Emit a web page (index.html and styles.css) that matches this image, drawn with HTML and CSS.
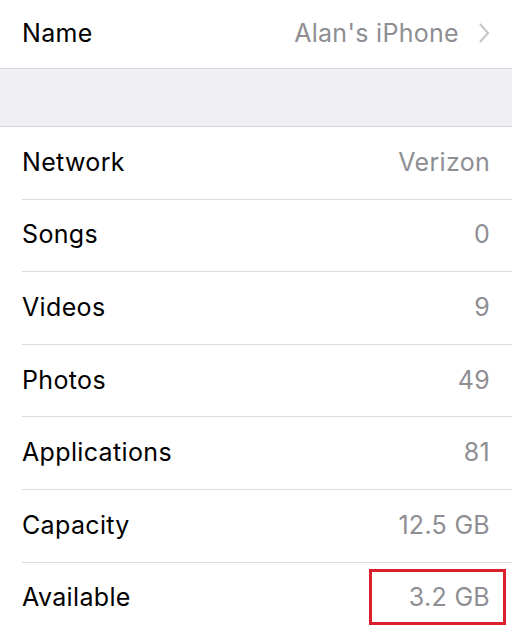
FILE: index.html
```html
<!DOCTYPE html>
<html lang="en">
<head>
  <meta charset="UTF-8">
  <meta name="viewport" content="width=device-width, initial-scale=1.0">
  <title>About</title>
  <link rel="stylesheet" href="styles.css">
</head>
<body>
  <div class="group first">
    <div class="row">
      <span class="label">Name</span>
      <span class="value">Alan's iPhone
        <svg class="chevron" width="12" height="22" viewBox="0 0 12 22"><path d="M2 2 L10 11 L2 20" fill="none" stroke="#c7c7cc" stroke-width="2.2"/></svg>
      </span>
    </div>
  </div>

  <div class="spacer"></div>

  <div class="group">
    <div class="row"><span class="label">Network</span><span class="value">Verizon</span></div>
    <div class="row"><span class="label">Songs</span><span class="value">0</span></div>
    <div class="row"><span class="label">Videos</span><span class="value">9</span></div>
    <div class="row"><span class="label">Photos</span><span class="value">49</span></div>
    <div class="row"><span class="label">Applications</span><span class="value">81</span></div>
    <div class="row"><span class="label">Capacity</span><span class="value">12.5 GB</span></div>
    <div class="row"><span class="label">Available</span><span class="value boxed">3.2 GB</span></div>
  </div>
</body>
</html>
```

FILE: styles.css
```css
body {
  margin: 0;
  background-color: #fff;
  font-family: Inter, "Liberation Sans", sans-serif;
  color: #000;
  overflow: hidden;
}
.group {
  background-color: #fff;
}
.first {
  border-bottom: 1px solid #d6d6da;
}
.first .row {
  height: 68px;
  border-bottom: none;
}
.spacer {
  height: 57px;
  background-color: #efeff4;
  border-bottom: 1px solid #d6d6da;
}
.row {
  display: flex;
  align-items: center;
  justify-content: space-between;
  height: 71.6px;
  margin-left: 22px;
  padding-right: 22px;
  border-bottom: 1px solid #dcdce0;
  font-size: 25px;
  line-height: 30px;
}
.row .label, .row .value { margin-top: -2px; }
.label { letter-spacing: 0.35px; }
.value {
  display: flex;
  align-items: center;
  gap: 19px;
  color: #8e8e93;
  letter-spacing: 0.3px;
}
.boxed {
  position: relative;
}
.boxed::after {
  content: "";
  position: absolute;
  left: -40px;
  right: -16px;
  top: -13px;
  bottom: -13px;
  border: 3px solid #d9202b;
}
```
